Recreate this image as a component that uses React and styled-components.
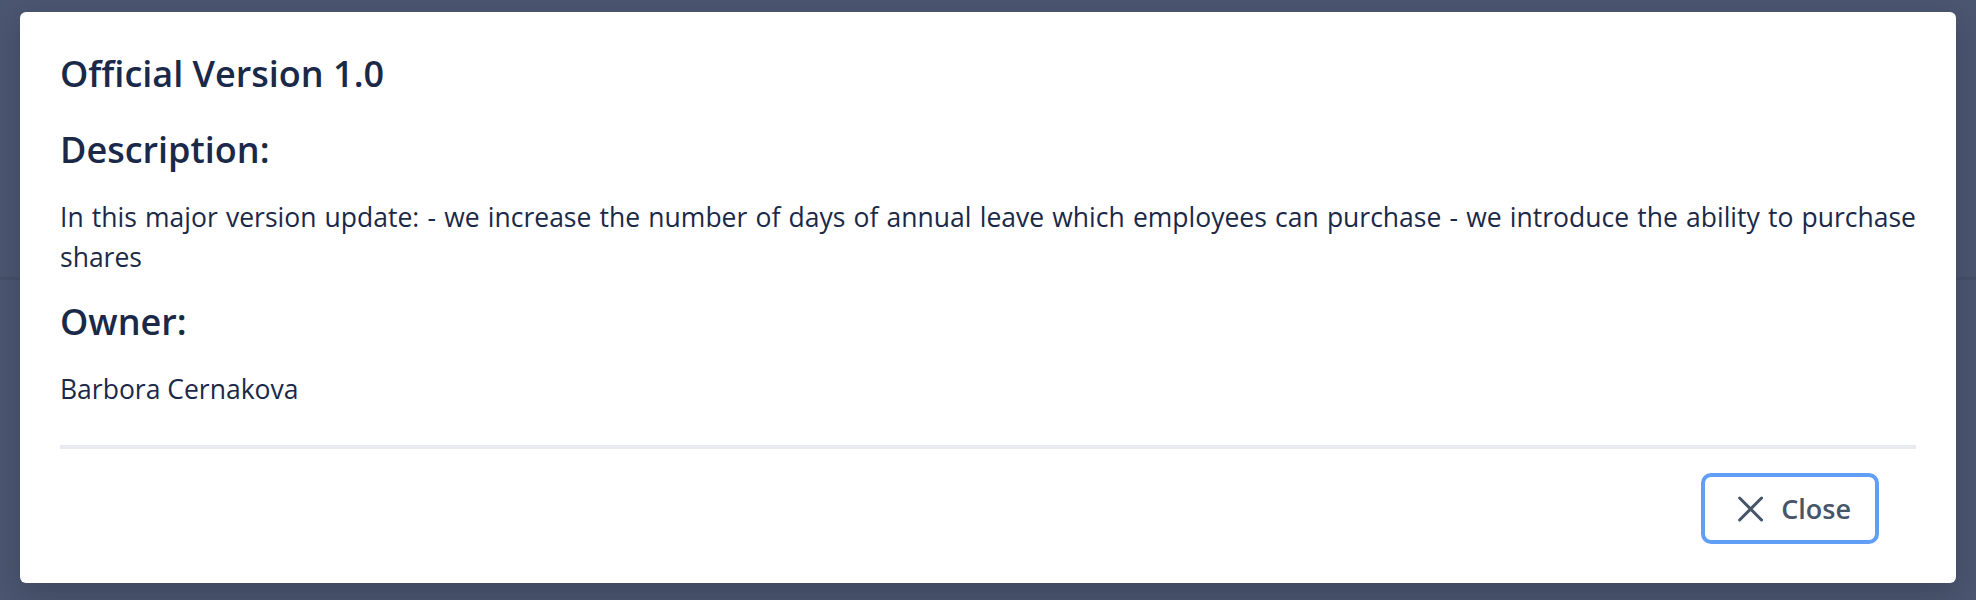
import React from 'react'
import styled, { createGlobalStyle } from 'styled-components';

const GlobalStyle = createGlobalStyle`
  html, body {
    margin: 0;
    padding: 0;
    background: #4b5670;
  }
  body {
    font-family: "Open Sans", "Noto Sans", sans-serif;
    -webkit-font-smoothing: antialiased;
  }
`;

function CloseIcon() {
  return (
    <svg width="28" height="28" viewBox="0 0 28 28" fill="none">
      <path d="M1.8 1.8 L26.2 26.2 M26.2 1.8 L1.8 26.2" stroke="currentColor" strokeWidth="3.4" strokeLinecap="round" />
    </svg>
  );
}

function App() {
  return (
    <>
      <GlobalStyle />
      <Backdrop>
        <PageHeader />
        <Modal role="dialog">
          <Title>Official Version 1.0</Title>
          <Heading>Description:</Heading>
          <Text>
            In this major version update: - we increase the number of days of annual leave which employees can purchase - we introduce the ability to purchase shares
          </Text>
          <Heading>Owner:</Heading>
          <Text>Barbora Cernakova</Text>
          <Divider />
          <Footer>
            <CloseButton type="button">
              <CloseIcon />
              Close
            </CloseButton>
          </Footer>
        </Modal>
      </Backdrop>
    </>
  )
}

export default App

const Backdrop = styled.div`
  position: relative;
  width: 1976px;
  height: 600px;
  background: #4b5670;
  overflow: hidden;
`;

const PageHeader = styled.div`
  height: 277px;
  border-bottom: 3px solid #465069;
`;

const Modal = styled.div`
  position: absolute;
  top: 12px;
  left: 20px;
  width: 1936px;
  height: 571px;
  box-sizing: border-box;
  padding: 40px;
  background: #ffffff;
  border-radius: 6px;
  box-shadow: 0 10px 30px rgba(20, 28, 48, 0.25);
  display: flex;
  flex-direction: column;
  color: #1b2949;
`;

const Title = styled.h1`
  margin: 0 0 32px;
  font-size: 36px;
  line-height: 44px;
  font-weight: 600;
`;

const Heading = styled.h2`
  margin: 0 0 25px;
  font-size: 36px;
  line-height: 44px;
  font-weight: 600;
`;

const Text = styled.p`
  margin: 0 0 23px;
  font-size: 26.5px;
  line-height: 40px;
  font-weight: 400;
  text-align: justify;
`;

const Divider = styled.div`
  margin: 13px 0 24px;
  height: 4px;
  flex-shrink: 0;
  background: #e9eaef;
`;

const Footer = styled.div`
  display: flex;
  justify-content: flex-end;
  padding-right: 37px;
`;

const CloseButton = styled.button`
  box-sizing: border-box;
  width: 178px;
  height: 71px;
  padding: 0 24px 0 33px;
  display: flex;
  align-items: center;
  gap: 18px;
  border: 4px solid #619ef6;
  border-radius: 10px;
  background: #ffffff;
  color: #475569;
  font-family: "Open Sans", "Noto Sans", sans-serif;
  font-size: 27px;
  font-weight: 600;
  cursor: pointer;
`;
